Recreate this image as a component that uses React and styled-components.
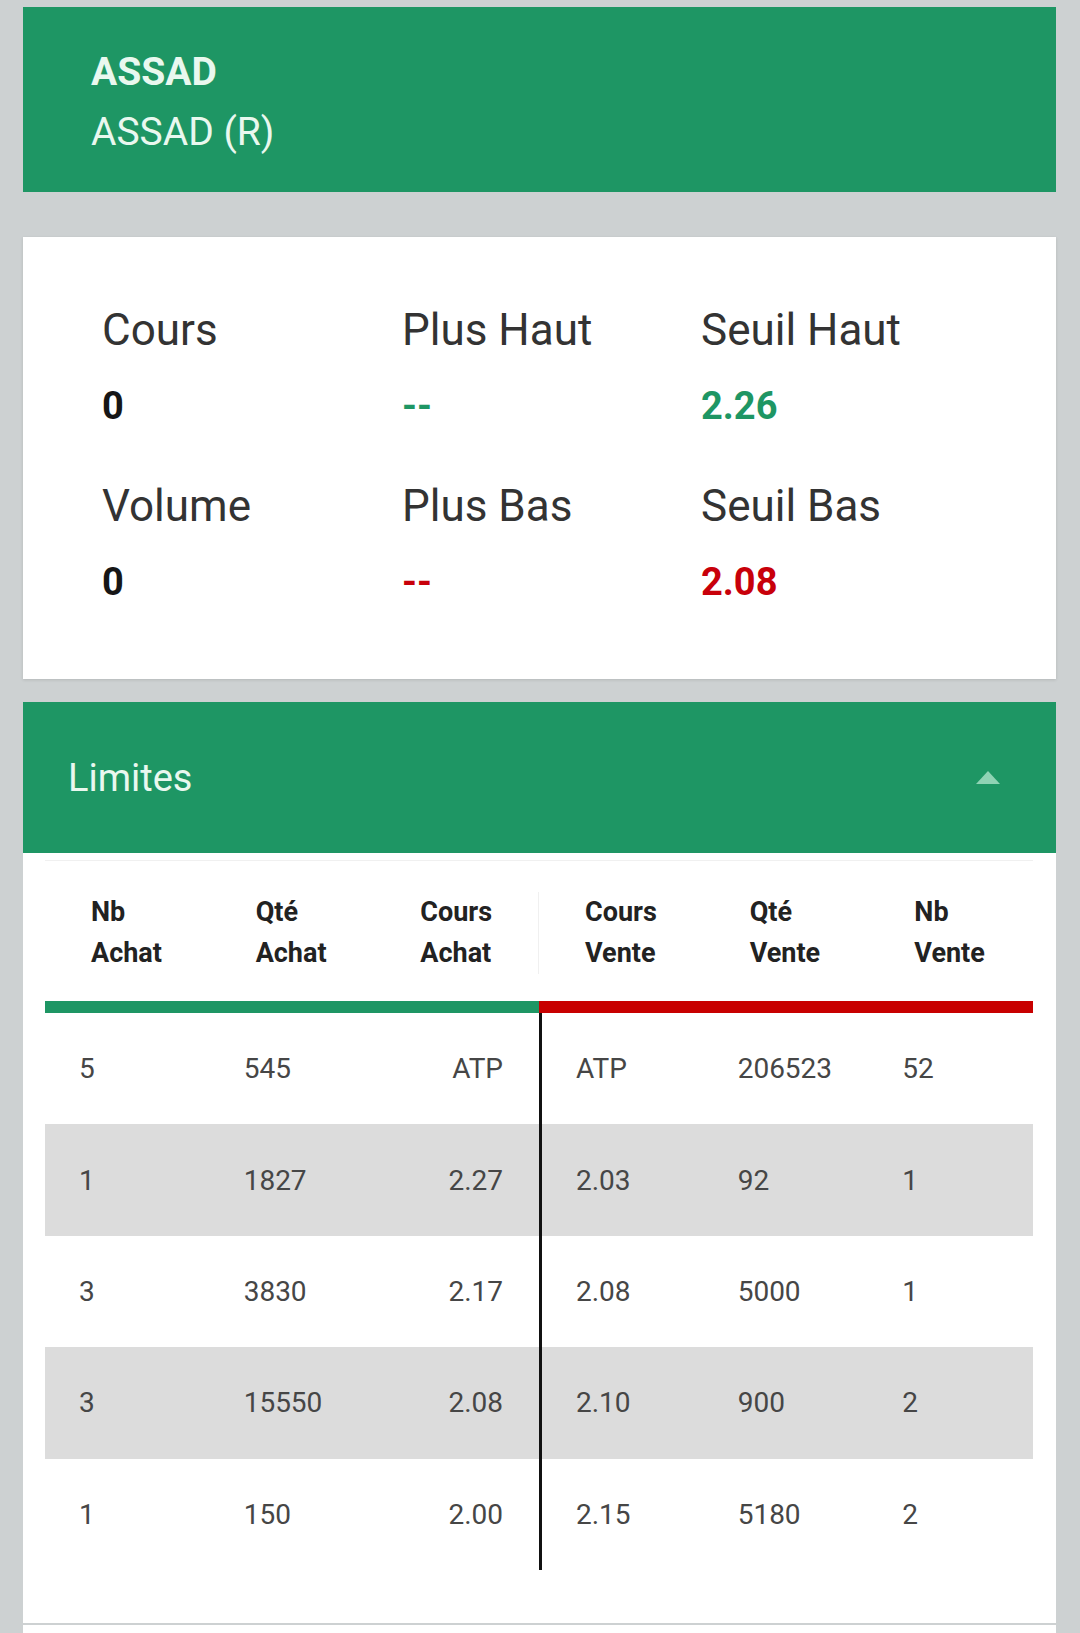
import React from 'react';
import styled, { createGlobalStyle } from 'styled-components';

const GlobalStyle = createGlobalStyle`
  html, body {
    margin: 0;
    padding: 0;
    background-color: #cdd1d2;
    font-family: 'Roboto', 'Liberation Sans', sans-serif;
  }
`;

const Page = styled.div`
  display: flex;
  flex-direction: column;
  padding: 7px 24px 0 23px;
  min-height: 1633px;
  box-sizing: border-box;
`;

const TitleBar = styled.header`
  display: flex;
  flex-direction: column;
  justify-content: center;
  height: 185px;
  padding: 4px 0 0 68px;
  box-sizing: border-box;
  background-color: #1e9664;
  color: #e9f8ef;
`;

const Ticker = styled.div`
  font-size: 39px;
  line-height: 60px;
  font-weight: ${(p) => (p.bold ? 700 : 400)};
`;

const StatsCard = styled.section`
  display: grid;
  grid-template-columns: 300px 299px 1fr;
  row-gap: 48px;
  margin-top: 45px;
  padding: 67px 0 71px 79px;
  background-color: #ffffff;
  box-shadow: 0 1px 3px rgba(0, 0, 0, 0.12);
`;

const Stat = styled.div`
  display: flex;
  flex-direction: column;
  gap: 24px;
`;

const StatLabel = styled.span`
  font-size: 44px;
  line-height: 52px;
  color: #333333;
`;

const StatValue = styled.span`
  font-size: 38px;
  line-height: 52px;
  font-weight: 700;
  color: ${(p) => p.color || '#161616'};
`;

const LimitsCard = styled.section`
  display: flex;
  flex-direction: column;
  margin-top: 23px;
  background-color: #ffffff;
  height: 921px;
`;

const LimitsHeader = styled.div`
  display: flex;
  align-items: center;
  justify-content: space-between;
  height: 151px;
  padding: 0 56px 0 45px;
  background-color: #1e9664;
  color: #e9f8ef;
  font-size: 38px;
`;

const Table = styled.div`
  display: flex;
  flex-direction: column;
  margin: 7px 23px 0 22px;
  border-top: 1px solid #f0f0f0;
`;

const HeadRow = styled.div`
  display: grid;
  grid-template-columns: repeat(6, 1fr);
  padding: 31px 0 27px;
`;

const HeadCell = styled.div`
  padding-left: 46px;
  font-size: 27px;
  line-height: 41px;
  font-weight: 700;
  color: #222222;
  border-left: ${(p) => (p.split ? '1px solid #f0f0f0' : 'none')};
  margin-left: ${(p) => (p.split ? '-1px' : '0')};
`;

const SideBar = styled.div`
  display: grid;
  grid-template-columns: 1fr 1fr;
  height: 12px;
`;

const BarHalf = styled.div`
  background-color: ${(p) => p.color};
`;

const Row = styled.div`
  display: grid;
  grid-template-columns: repeat(6, 1fr);
  height: 111.4px;
  background-color: ${(p) => (p.striped ? '#dcdcdc' : 'transparent')};
`;

const Cell = styled.div`
  display: flex;
  align-items: center;
  justify-content: ${(p) => (p.right ? 'flex-end' : 'flex-start')};
  padding: ${(p) => (p.right ? '0 36px 0 0' : '0 0 0 34px')};
  font-size: 28px;
  color: #464646;
  border-left: ${(p) => (p.split ? '3px solid #111111' : 'none')};
`;

const NextCard = styled.div`
  margin-top: 2px;
  height: 10px;
  background-color: #ffffff;
`;

const Caret = () => (
  <svg width="24" height="13" viewBox="0 0 24 13">
    <path d="M12 0 L24 13 L0 13 Z" fill="#8fd3b4" />
  </svg>
);

const stats = [
  { label: 'Cours', value: '0' },
  { label: 'Plus Haut', value: '--', color: '#1e9664' },
  { label: 'Seuil Haut', value: '2.26', color: '#1e9664' },
  { label: 'Volume', value: '0' },
  { label: 'Plus Bas', value: '--', color: '#c8000a' },
  { label: 'Seuil Bas', value: '2.08', color: '#c8000a' },
];

const heads = [
  ['Nb', 'Achat'],
  ['Qté', 'Achat'],
  ['Cours', 'Achat'],
  ['Cours', 'Vente'],
  ['Qté', 'Vente'],
  ['Nb', 'Vente'],
];

const rows = [
  ['5', '545', 'ATP', 'ATP', '206523', '52'],
  ['1', '1827', '2.27', '2.03', '92', '1'],
  ['3', '3830', '2.17', '2.08', '5000', '1'],
  ['3', '15550', '2.08', '2.10', '900', '2'],
  ['1', '150', '2.00', '2.15', '5180', '2'],
];

export default function App() {
  return (
    <>
      <GlobalStyle />
      <Page>
        <TitleBar>
          <Ticker bold>ASSAD</Ticker>
          <Ticker>ASSAD (R)</Ticker>
        </TitleBar>

        <StatsCard>
          {stats.map((s) => (
            <Stat key={s.label}>
              <StatLabel>{s.label}</StatLabel>
              <StatValue color={s.color}>{s.value}</StatValue>
            </Stat>
          ))}
        </StatsCard>

        <LimitsCard>
          <LimitsHeader>
            <span>Limites</span>
            <Caret />
          </LimitsHeader>
          <Table>
            <HeadRow>
              {heads.map((h, i) => (
                <HeadCell key={i} split={i === 3}>
                  {h[0]}
                  <br />
                  {h[1]}
                </HeadCell>
              ))}
            </HeadRow>
            <SideBar>
              <BarHalf color="#1e9664" />
              <BarHalf color="#c80000" />
            </SideBar>
            {rows.map((r, i) => (
              <Row key={i} striped={i % 2 === 1}>
                {r.map((v, j) => (
                  <Cell key={j} right={j === 2} split={j === 3}>
                    {v}
                  </Cell>
                ))}
              </Row>
            ))}
          </Table>
        </LimitsCard>
        <NextCard />
      </Page>
    </>
  );
}
